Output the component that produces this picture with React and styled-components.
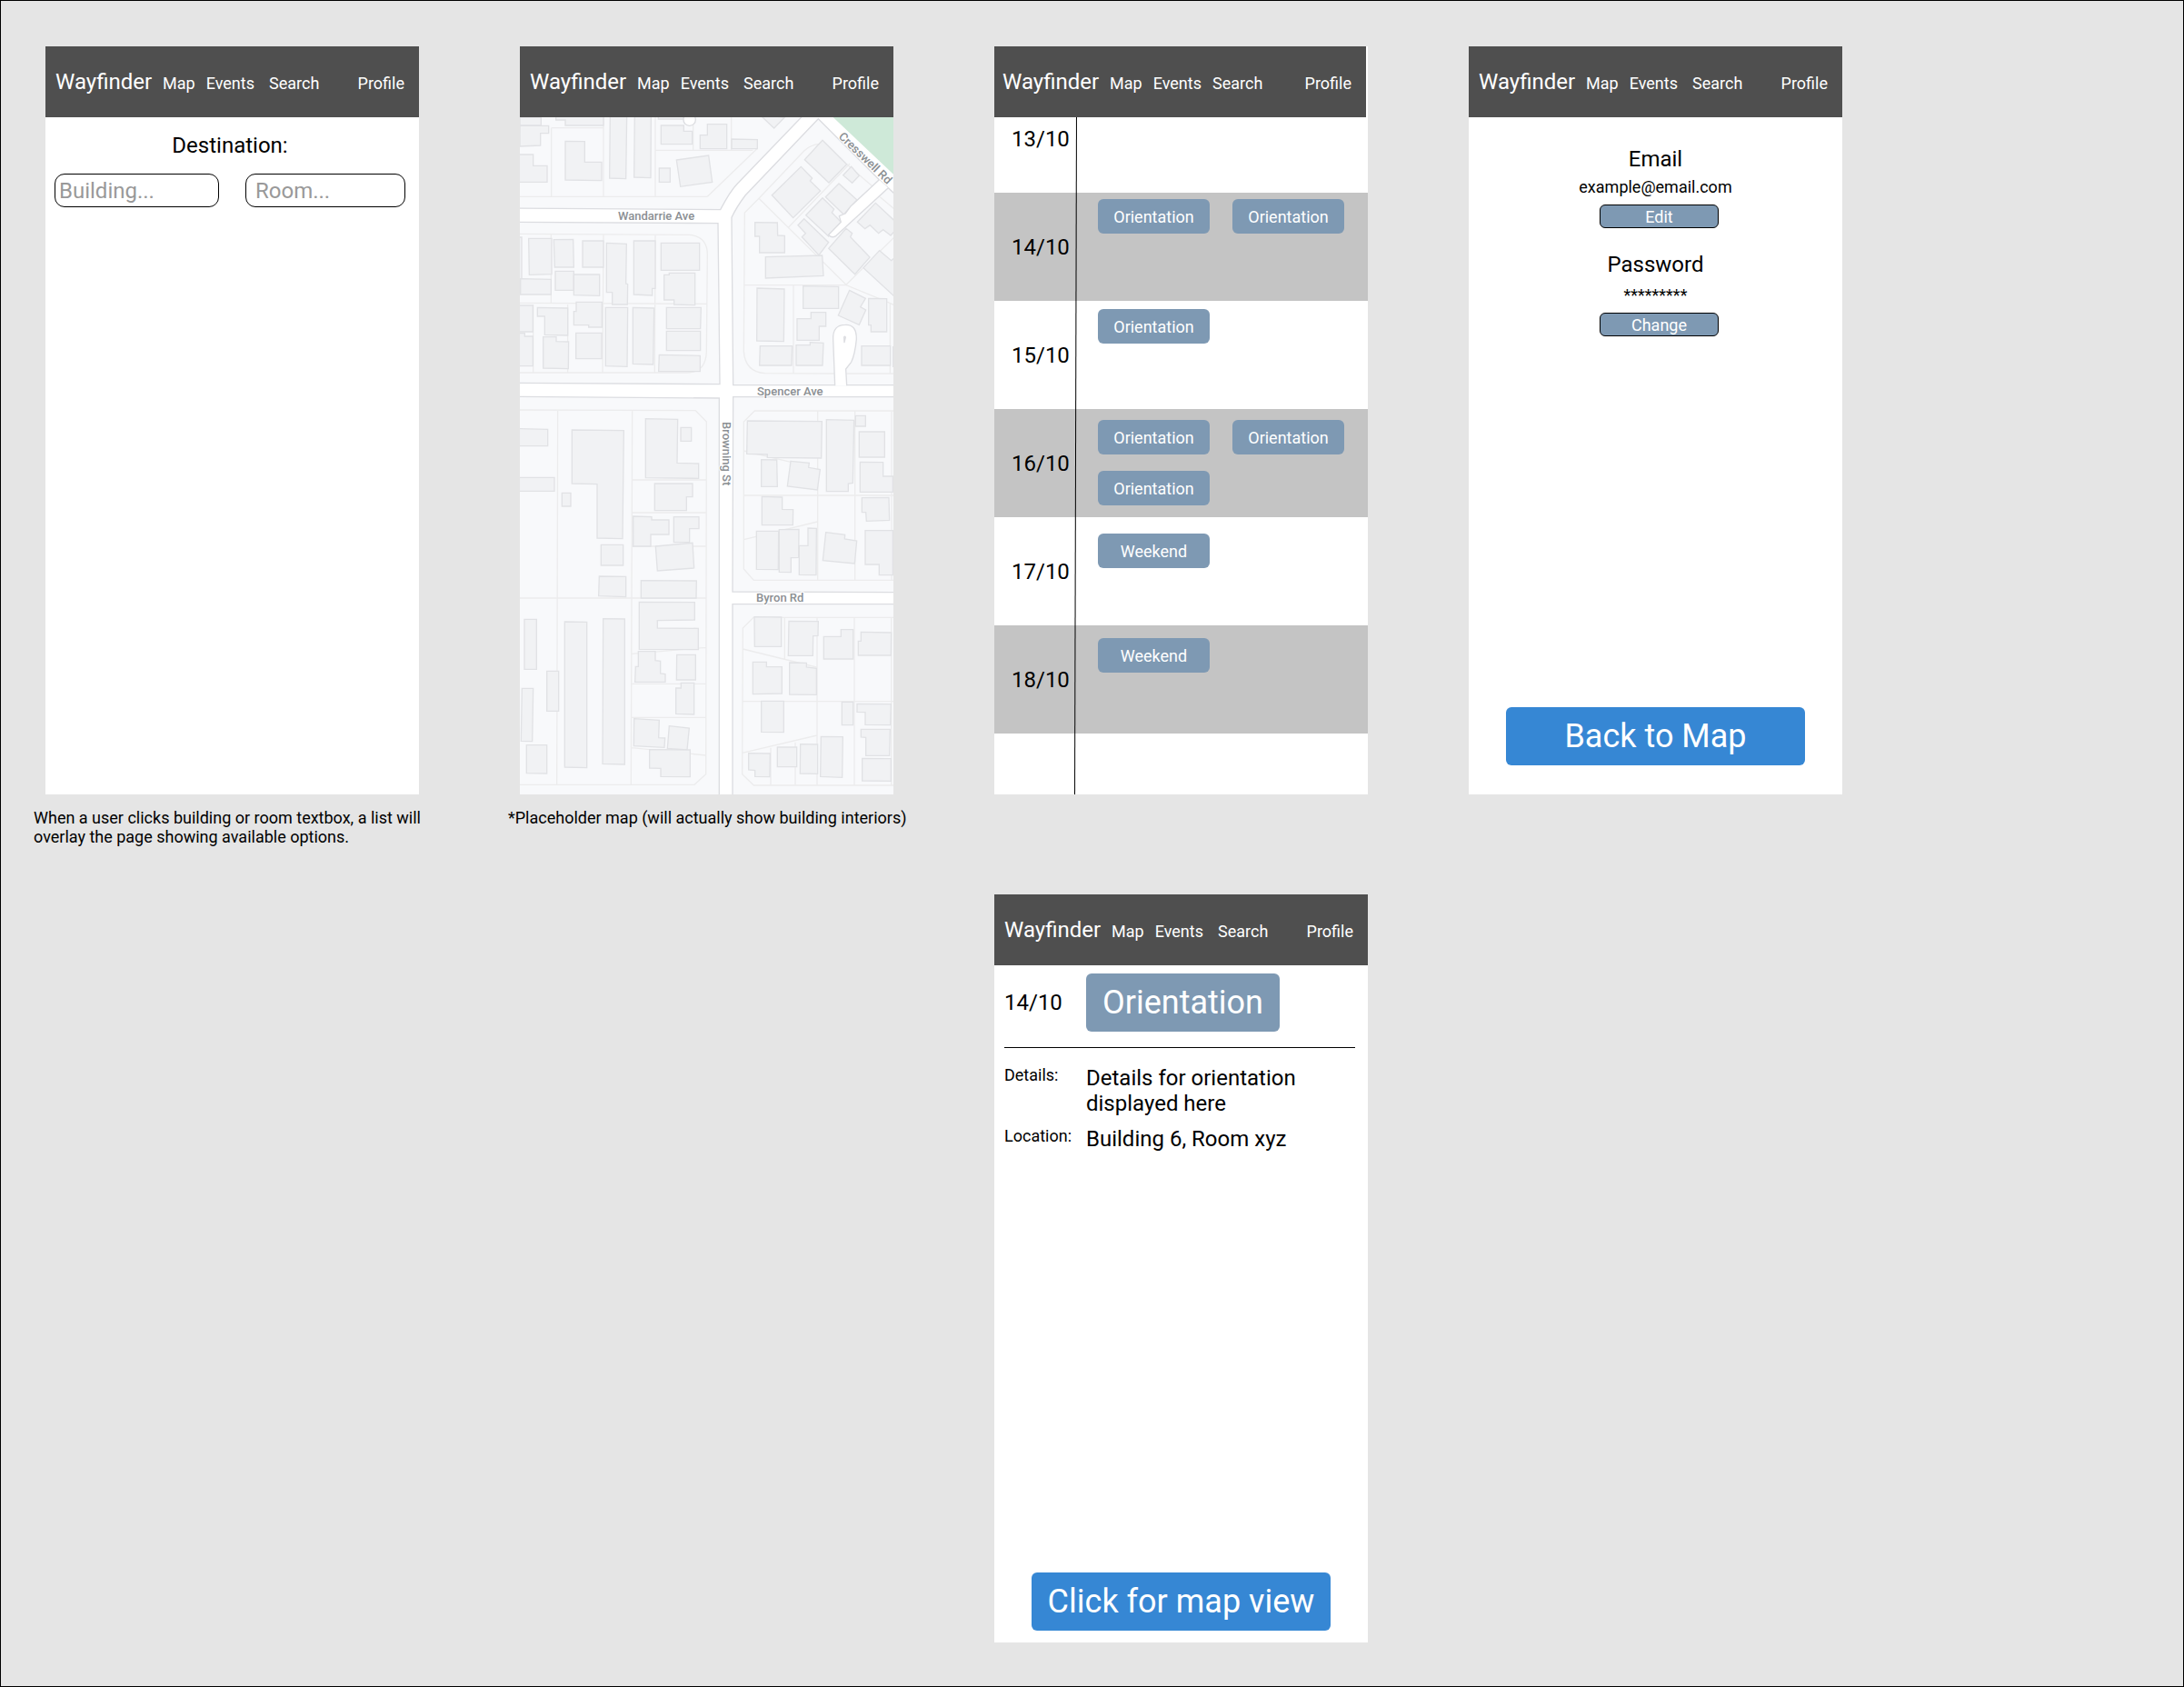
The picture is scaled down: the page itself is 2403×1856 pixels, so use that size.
import React from "react";
import styled, { createGlobalStyle, css } from "styled-components";

const color = {
  canvas: "#e5e5e5",
  header: "#4f4f4f",
  stripe: "#c4c4c4",
  event: "#7e99b3",
  primary: "#3687d4",
  placeholder: "#999999",
};

const GlobalStyle = createGlobalStyle`
  *, *::before, *::after { box-sizing: border-box; }
  body {
    margin: 0;
    background: ${color.canvas};
    color: #000;
    font-family: Roboto, "Liberation Sans", sans-serif;
    font-size: 18px;
    line-height: 21px;
  }
  h2, p, ul, dl, dd, figure { margin: 0; padding: 0; }
  button, input { font: inherit; }
`;

/* ---------- Board ---------- */

const Board = styled.main`
  min-height: 100vh;
  padding: 50px 49px 48px;
  border: 1px solid #000;
  display: grid;
  grid-template-columns: repeat(auto-fill, 411px);
  gap: 53px 111px;
  align-content: start;
`;

const Artboard = styled.figure`
  @media (min-width: 2080px) {
    grid-column: ${(p) => p.$column};
  }
`;

const Phone = styled.section`
  min-height: 823px;
  background: #fff;
  display: flex;
  flex-direction: column;
`;

const Caption = styled.figcaption`
  margin: 15px -18px 0 -13px;
`;

/* ---------- Header ---------- */

const Header = styled.header`
  height: 78px;
  margin-right: ${(p) => (p.$tight ? "2px" : "0")};
  padding: 25px 16px 0 ${(p) => (p.$tight ? "9px" : "11px")};
  background: ${color.header};
  flex: none;
`;

const Nav = styled.nav`
  display: flex;
  align-items: baseline;
  gap: 12px;
`;

const NavLink = styled.a`
  color: #fff;
  text-decoration: none;
  ${(p) => p.$spaced && css`margin-left: 4px;`}
  ${(p) => p.$end && css`margin-left: auto;`}
`;

const Brand = styled(NavLink)`
  font-size: 24px;
  line-height: 28px;
`;

function TopBar({ tight }) {
  return (
    <Header $tight={tight}>
      <Nav>
        <Brand href="#home">Wayfinder</Brand>
        <NavLink href="#map">Map</NavLink>
        <NavLink href="#events">Events</NavLink>
        <NavLink href="#search" $spaced={!tight}>Search</NavLink>
        <NavLink href="#profile" $end>Profile</NavLink>
      </Nav>
    </Header>
  );
}

/* ---------- Shared text and buttons ---------- */

const Title = styled.h2`
  font-size: 24px;
  line-height: 28px;
  font-weight: 400;
  text-align: center;
`;

const Button = styled.button`
  padding: 0;
  border: 0;
  border-radius: 6px;
  background: ${color.event};
  color: #fff;
  text-align: center;
  cursor: pointer;
`;

const EventButton = styled(Button)`
  width: 123px;
  height: 38px;
`;

const SmallButton = styled(Button)`
  width: 131px;
  height: 26px;
  margin: 9px 0 0 8px;
  border: 1px solid #000;
`;

const PrimaryButton = styled(Button)`
  height: 64px;
  margin: auto 41px ${(p) => p.$bottom}px;
  background: ${color.primary};
  font-size: 36px;
  line-height: 42px;
`;

/* ---------- Search ---------- */

const SearchForm = styled.form`
  padding: 17px 15px 0 10px;
`;

const Fields = styled.div`
  margin-top: 17px;
  display: grid;
  grid-template-columns: 181fr 176fr;
  gap: 29px;
`;

const Field = styled.input`
  min-width: 0;
  height: 37px;
  padding: 0 ${(p) => p.$inset}px;
  border: 1px solid #000;
  border-radius: 11px;
  background: #fff;
  font-size: 24px;
  line-height: 28px;

  &::placeholder {
    color: ${color.placeholder};
    opacity: 1;
  }
`;

function SearchScreen() {
  return (
    <Phone>
      <TopBar />
      <SearchForm>
        <Title>Destination:</Title>
        <Fields>
          <Field aria-label="Building" placeholder="Building..." $inset={4} />
          <Field aria-label="Room" placeholder="Room..." $inset={10} />
        </Fields>
      </SearchForm>
    </Phone>
  );
}

/* ---------- Map ---------- */

const MapDrawing = styled.svg`
  display: block;
  width: 100%;
  height: auto;
  background: #fff;

  .land { fill: #f8f9fb; stroke: #dcdde1; stroke-width: 4; }
  .street { fill: #fff; stroke: #dcdde1; stroke-width: 4; stroke-linejoin: round; }
  .parcel { fill: none; stroke: #ececed; stroke-width: 4; }
  .building { fill: #f1f2f4; stroke: #e1e2e5; stroke-width: 4; }
  .park { fill: #cee9d8; }
  text {
    fill: #8b8f93;
    stroke: #fff;
    stroke-width: 2px;
    paint-order: stroke;
    font-size: 13px;
    font-weight: 500;
  }
`;

const quadrants = [
  {
    at: "-36 -27",
    parcels:
      "M36 289H655M140 62V290M140 62H312M312 27V290M483 27V290M483 136H805M608 27V136M36 412L595 415Q655 420 655 480L652 800Q650 868 590 870H36M139 412V640M36 640L652 643M312 412L309 870M483 415L481 870M80 645V870M194 645V870",
    buildings: [
      "36,27 106,27 106,54 36,54",
      "36,55 131,55 131,80 104,80 104,120 36,123",
      "30,150 80,150 80,187 126,187 126,241 30,241",
      "155,20 155,36 186,36 186,54 312,54 312,20",
      "186,106 250,107 250,175 306,175 306,236 186,234",
      "334,20 389,20 386,230 332,228",
      "415,20 469,20 468,227 413,225",
      "493,20 577,20 577,33 493,33",
      "502,54 577,54 577,73 605,73 605,116 502,116",
      "496,195 532,195 532,241 496,241",
      "553,168 659,153 671,241 566,256",
      "631,86 655,86 655,50 719,50 719,131 631,131",
      "30,423 42,423 42,570 30,570",
      "65,427 141,427 141,545 67,547",
      "148,431 212,430 214,522 151,522",
      "243,435 312,435 312,522 243,522",
      "153,535 214,535 214,598 153,598",
      "214,546 299,546 299,616 214,614",
      "38,560 139,562 139,612 38,612",
      "322,442 388,445 386,576 392,578 391,645 341,645 341,605 322,605",
      "412,435 483,435 483,592 473,592 473,615 412,612",
      "502,442 629,442 629,532 502,532",
      "512,547 529,547 529,541 614,541 614,647 545,645 545,630 512,630",
      "30,648 79,648 79,735 30,735",
      "30,740 52,740 52,750 79,750 79,848 30,848",
      "94,655 194,657 194,747 118,745 118,684 94,684",
      "222,637 307,637 307,720 263,720 263,713 214,713 214,668 222,668",
      "113,752 156,752 156,767 197,768 196,857 113,855",
      "221,739 306,739 306,824 221,824",
      "319,655 392,655 390,850 319,848",
      "409,655 479,657 476,843 409,841",
      "520,655 634,655 632,725 520,725",
      "520,733 632,733 632,797 520,797",
      "496,811 631,814 631,866 494,866",
    ],
  },
  {
    at: "594 -27",
    parcels:
      "M25 289L190 130M104 27V138M395 115Q365 118 345 137L195 295L148 342L145 800Q150 868 215 872L445 873M484 873H660M195 295L483 580M293 390L495 180M147 581H483L620 637L660 655M309 581V872M628 640V873M483 580L660 405M595 290L660 345M485 182L570 255",
    buildings: [
      "105,99 190,101 190,131 105,131",
      "193,20 207,27 245,63 280,27",
      "346,167 405,103 485,182 426,243",
      "238,284 334,190 371,228 364,237 398,270 308,359",
      "473,218 500,190 526,220 503,244",
      "415,290 459,246 519,300 475,348",
      "350,350 405,293 443,330 436,342 466,373 425,420",
      "324,383 344,362 425,440 393,482 337,422 349,410",
      "425,460 483,394 503,410 497,422 561,489 512,545",
      "520,373 580,310 660,385 630,417 605,398 590,410 562,383 545,395",
      "540,524 593,467 632,500 660,475 660,635",
      "182,374 256,375 257,417 280,418 280,474 197,474 197,420 182,420",
      "217,488 404,483 408,550 217,558",
      "189,591 279,594 277,767 188,765",
      "341,584 458,586 458,658 341,658",
      "457,681 494,598 547,625 530,653 548,663 526,712",
      "557,625 617,626 617,735 565,735 565,713 557,713",
      "321,692 367,692 367,671 416,671 416,717 394,717 394,763 321,763",
      "318,779 364,779 364,770 408,772 405,846 318,846",
      "199,782 305,782 303,846 197,846",
      "534,782 629,782 629,846 534,846",
      "638,785 660,785 660,850 638,850",
    ],
  },
  {
    at: "-36 873",
    parcels:
      "M36 93L616 95L652 132L650 1295L612 1330H36M161 93L158 1330M407 95L403 1330M36 714H650M407 324H652M407 432H652M407 543H652M405 898L650 877M405 997H650M405 1108H650M405 1208L650 1233",
    buildings: [
      "30,155 128,157 128,212 30,212",
      "30,316 150,316 150,361 30,361",
      "175,367 204,367 204,411 175,411",
      "208,159 379,161 375,518 291,516 291,338 208,336",
      "304,538 377,538 377,606 304,606",
      "298,642 386,643 386,710 296,707",
      "451,122 557,124 555,268 626,270 626,319 451,317",
      "567,151 602,151 602,196 567,196",
      "481,336 606,336 606,380 586,380 586,425 481,425",
      "410,444 471,446 471,456 528,456 528,504 468,504 468,543 410,543",
      "544,446 627,446 627,485 596,485 596,530 544,530",
      "484,543 606,532 611,615 490,624",
      "436,656 619,657 618,714 436,714",
      "430,727 613,728 613,786 490,788 490,813 625,814 625,884 430,883",
      "51,784 91,784 91,949 51,949",
      "125,955 164,955 164,1087 125,1087",
      "43,1012 80,1012 77,1187 40,1186",
      "58,1199 125,1199 125,1293 58,1292",
      "184,792 257,793 257,1274 184,1272",
      "311,782 382,783 382,1263 309,1261",
      "427,890 483,890 483,920 500,922 500,963 516,965 516,991 416,991 418,940 427,940",
      "554,901 616,901 616,984 553,984",
      "551,1011 568,1011 568,994 611,994 611,1098 551,1096",
      "413,1112 496,1117 494,1175 515,1176 513,1207 412,1202",
      "529,1136 595,1143 588,1215 523,1210",
      "464,1214 598,1215 598,1304 501,1303 501,1276 464,1275",
    ],
  },
  {
    at: "594 873",
    parcels:
      "M660 96H181L145 132V618L178 655H660M389 96V655M512 96V655M633 96V655M145 375H660M145 228L300 265M145 521L388 462M660 778H177L142 813L140 1295L178 1332H660M387 778V1332M510 778V1332M632 778V1332M280 778V915M142 882L385 942M140 1055H660M140 1225L387 1167M234 1208V1332M315 1190V1332",
    buildings: [
      "157,129 403,131 401,252 223,250 223,240 155,238",
      "203,257 254,258 256,346 203,346",
      "300,262 361,268 359,283 397,290 388,357 289,345",
      "418,125 509,127 505,334 490,336 490,362 418,362",
      "514,112 547,112 547,147 514,147",
      "526,165 610,165 610,249 526,249",
      "529,265 605,266 605,312 637,312 637,364 529,364",
      "205,379 272,381 272,421 308,422 307,473 205,473",
      "187,493 260,493 259,620 187,619",
      "262,488 327,487 326,580 301,581 301,629 262,628",
      "328,541 357,541 357,483 385,484 384,638 328,637",
      "416,497 479,505 478,519 518,525 511,600 406,590",
      "535,383 624,382 626,457 550,460 548,431 535,431",
      "546,491 637,491 637,638 592,638 592,603 546,603",
      "180,776 269,777 269,874 181,874",
      "294,790 391,791 390,838 374,839 373,904 292,904",
      "409,841 466,841 466,818 506,818 506,915 409,915",
      "523,856 532,856 532,826 632,828 631,903 523,903",
      "175,925 220,925 220,941 271,941 271,1029 175,1031",
      "296,927 352,928 352,942 385,946 385,1033 296,1032",
      "203,1054 277,1054 277,1157 203,1156",
      "469,1057 506,1057 506,1133 469,1133",
      "519,1063 631,1064 629,1133 546,1132 546,1091 519,1090",
      "532,1147 628,1147 626,1234 548,1234 548,1174 532,1173",
      "536,1243 631,1244 631,1318 536,1317",
      "400,1171 472,1172 470,1306 398,1303",
      "332,1196 389,1197 389,1294 331,1293",
      "256,1206 320,1206 320,1271 256,1271",
      "161,1226 232,1227 231,1304 182,1303 182,1283 161,1281",
    ],
  },
];

function StreetMap() {
  return (
    <MapDrawing viewBox="0 0 411 745" role="img" aria-label="Street map">
      <g transform="scale(0.33333)">
        <g transform="translate(594 -27)">
          <path className="land" d="M-620 0H362L335 27L125 245Q100 270 68 332L-620 327Z" />
          <path className="land" d="M-620 373L60 377L66 908L-620 904Z" />
          <path className="land" d="M391 32L592 233L622 260L670 305V911H110L105 358Q120 325 150 285Z" />
          <path className="park" d="M440 27L660 235V27Z" />
        </g>
        <g transform="translate(594 873)">
          <path className="land" d="M-620 49L64 54V1380H-620Z" />
          <path className="land" d="M110 50H670V695L108 693Z" />
          <path className="land" d="M108 734H670V1380H108Z" />
        </g>
        {quadrants.map((q) => (
          <g key={q.at} transform={`translate(${q.at})`}>
            <path className="parcel" d={q.parcels} />
            {q.buildings.map((points) => (
              <polygon key={points} className="building" points={points} />
            ))}
          </g>
        ))}
        <circle className="street" cx="560" cy="8" r="20" />
        <g transform="translate(594 -27)">
          <path
            className="street"
            d="M592 233L497 322L480 345L460 353L466 373L425 415Q435 428 450 418L622 260"
          />
          <path
            className="street"
            d="M446 913L440 760Q438 712 480 712Q518 710 517 760Q512 810 500 835L482 858L485 913"
          />
          <path className="street" d="M477 770L476 753Q478 748 481 753Z" />
        </g>
      </g>
      <text x="108" y="113">Wandarrie Ave</text>
      <text x="261" y="306">Spencer Ave</text>
      <text x="260" y="533">Byron Rd</text>
      <text transform="translate(350 22) rotate(44)">Cresswell Rd</text>
      <text transform="translate(223 335) rotate(90)">Browning St</text>
    </MapDrawing>
  );
}

function MapScreen() {
  return (
    <Phone>
      <TopBar />
      <StreetMap />
    </Phone>
  );
}

/* ---------- Events ---------- */

const Schedule = styled.div`
  position: relative;
  flex: 1;
`;

const Days = styled.ul`
  list-style: none;
`;

const Day = styled.li`
  min-height: ${(p) => (p.$partial ? "83px" : "119px")};
  padding-bottom: ${(p) => (p.$partial ? "36px" : "0")};
  display: flex;
  align-items: center;

  &:nth-child(even) {
    background: ${color.stripe};
  }
`;

const DayLabel = styled.span`
  width: 114px;
  padding-left: 19px;
  flex: none;
  font-size: 24px;
  line-height: 28px;
`;

const DayEvents = styled.div`
  align-self: flex-start;
  flex: 1;
  padding-top: ${(p) => p.$top}px;
  display: flex;
  flex-wrap: wrap;
  gap: 18px 25px;
`;

const Timeline = styled.div`
  position: absolute;
  top: 0;
  bottom: 0;
  left: 89px;
  width: 1px;
  background: #000;
  transform: rotate(0.15deg);
`;

const days = [
  { date: "13/10", top: 0, events: [] },
  { date: "14/10", top: 7, events: ["Orientation", "Orientation"] },
  { date: "15/10", top: 9, events: ["Orientation"] },
  { date: "16/10", top: 12, events: ["Orientation", "Orientation", "Orientation"] },
  { date: "17/10", top: 18, events: ["Weekend"] },
  { date: "18/10", top: 14, events: ["Weekend"] },
];

function EventsScreen() {
  return (
    <Phone>
      <TopBar tight />
      <Schedule>
        <Days>
          {days.map((day, i) => (
            <Day key={day.date} $partial={i === 0}>
              <DayLabel>{day.date}</DayLabel>
              <DayEvents $top={day.top}>
                {day.events.map((name, n) => (
                  <EventButton key={n} type="button">{name}</EventButton>
                ))}
              </DayEvents>
            </Day>
          ))}
        </Days>
        <Timeline />
      </Schedule>
    </Phone>
  );
}

/* ---------- Profile ---------- */

const Account = styled.div`
  padding-top: 32px;
  display: grid;
  gap: 26px;
`;

const Credential = styled.div`
  display: flex;
  flex-direction: column;
  align-items: center;
`;

const CredentialValue = styled.p`
  margin-top: ${(p) => p.$gap}px;
`;

function ProfileScreen() {
  return (
    <Phone>
      <TopBar />
      <Account>
        <Credential>
          <Title>Email</Title>
          <CredentialValue $gap={6}>example@email.com</CredentialValue>
          <SmallButton type="button">Edit</SmallButton>
        </Credential>
        <Credential>
          <Title>Password</Title>
          <CredentialValue $gap={9}>*********</CredentialValue>
          <SmallButton type="button">Change</SmallButton>
        </Credential>
      </Account>
      <PrimaryButton type="button" $bottom={32}>Back to Map</PrimaryButton>
    </Phone>
  );
}

/* ---------- Event details ---------- */

const Detail = styled.div`
  padding: 9px 14px 0 11px;
`;

const DetailHead = styled.div`
  padding-bottom: 17px;
  border-bottom: 1px solid #000;
  display: grid;
  grid-template-columns: 90px 1fr;
  align-items: center;
`;

const DetailDate = styled.span`
  font-size: 24px;
  line-height: 28px;
`;

const EventBadge = styled(Button)`
  width: 213px;
  height: 64px;
  font-size: 36px;
  line-height: 42px;
`;

const Facts = styled.dl`
  padding-top: 19px;
  display: grid;
  grid-template-columns: 90px 1fr;
  row-gap: 11px;
`;

const FactValue = styled.dd`
  font-size: 24px;
  line-height: 28px;
`;

function DetailScreen() {
  return (
    <Phone>
      <TopBar />
      <Detail>
        <DetailHead>
          <DetailDate>14/10</DetailDate>
          <EventBadge type="button">Orientation</EventBadge>
        </DetailHead>
        <Facts>
          <dt>Details:</dt>
          <FactValue>Details for orientation displayed here</FactValue>
          <dt>Location:</dt>
          <FactValue>Building 6, Room xyz</FactValue>
        </Facts>
      </Detail>
      <PrimaryButton type="button" $bottom={13}>Click for map view</PrimaryButton>
    </Phone>
  );
}

export default function App() {
  return (
    <>
      <GlobalStyle />
      <Board>
        <Artboard $column={1}>
          <SearchScreen />
          <Caption>
            When a user clicks building or room textbox, a list will overlay the page showing
            available options.
          </Caption>
        </Artboard>
        <Artboard $column={2}>
          <MapScreen />
          <Caption>*Placeholder map (will actually show building interiors)</Caption>
        </Artboard>
        <Artboard $column={3}>
          <EventsScreen />
        </Artboard>
        <Artboard $column={4}>
          <ProfileScreen />
        </Artboard>
        <Artboard $column={3}>
          <DetailScreen />
        </Artboard>
      </Board>
    </>
  );
}
